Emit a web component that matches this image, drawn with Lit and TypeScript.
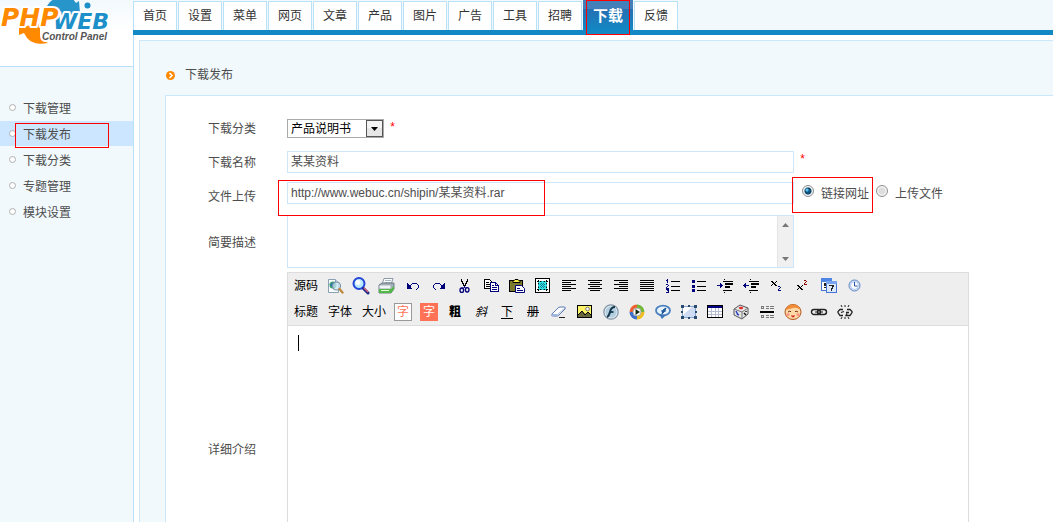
import { LitElement, html, css, svg, type SVGTemplateResult } from "lit";
import { customElement, property, state } from "lit/decorators.js";

const NAVY = "#00007b";

const lines = (rows: Array<[number, number]>, color = "#000") =>
  rows.map(([x, w], i) => svg`<rect x=${x} y=${3 + i * 2} width=${w} height="1" fill=${color} />`);

const undoShape = svg`
  <path d="M3 6h1v1h1v1h1v1h1v2h1v1h-5z" fill=${NAVY} />
  <path d="M6 8h1v-1h1v-1h5v1h1v1h1v3h-1v1h-1v1h-1v-1h1v-1h1v-3h-1v-1h-5v1h-1v1h-1z" fill=${NAVY} />`;

const indentShape = (flip: boolean) => svg`
  <path d="M8 2h1v1h-1zM8 15h1v1h-1z" fill="#000" />
  <path d="M7 4h10v1h-10zM9 6h8v2h-8zM9 9h5v2h-5zM7 13h9v1h-9z" fill="#000" />
  <g transform=${flip ? "translate(8 0) scale(-1 1)" : ""}>
    <path d="M1 8h3v-2h1v1h1v1h1v1h-1v1h-1v1h-1v-2h-3z" fill=${NAVY} />
  </g>`;

const ICONS: Record<string, SVGTemplateResult> = {
  preview: svg`
    <path d="M2.500 2.500h7l3 3v10h-10z" fill="#fafcff" stroke="#8aa0b4" />
    <path d="M9.500 2.500v3h3" fill="#d9e4ee" stroke="#8aa0b4" />
    <circle cx="7" cy="8" r="3.600" fill="#3aa070" />
    <path d="M4 8q3-3 5-2l-2 4z" fill="#2d6fc0" />
    <circle cx="10.500" cy="9" r="4" fill="#cfe8f7" fill-opacity=".75" stroke="#7893a8" stroke-width="1.200" />
    <path d="M13.500 12l3 3.500" stroke="#c08a3e" stroke-width="2.400" stroke-linecap="round" />`,
  search: svg`
    <circle cx="7" cy="6.500" r="5.500" fill="#b9eaff" stroke="#2546d8" stroke-width="2" />
    <circle cx="6" cy="5.500" r="2.500" fill="#fff" />
    <path d="M11.500 11.500l4.500 4.500" stroke="#1d2c86" stroke-width="3" stroke-linecap="round" />
    <path d="M12 11l4 4" stroke="#e0607a" stroke-width="1.200" />`,
  print: svg`
    <path d="M6 1.500h9l-2 6h-9z" fill="#fff" stroke="#8b98a8" />
    <path d="M7 3.500h6M6.500 5.500h6" stroke="#a8b8c8" />
    <path d="M1 8l3-2h12v6l-3 4h-12z" fill="#a3afb8" stroke="#6f7e88" />
    <path d="M1.500 8.500h11v3h-11z" fill="#f1f4f6" />
    <path d="M1 12h12l3-3v3l-3 4h-12z" fill="#53b946" />
    <path d="M3 13.500h8" stroke="#eaffdf" />`,
  undo: undoShape,
  redo: svg`<g transform="translate(18 0) scale(-1 1)">${undoShape}</g>`,
  cut: svg`
    <path d="M5 2h1v2h1v2h1v2h1v-2h1v-2h1v-2h1v3h-1v2h-1v2h-1v2h-1v-2h-1v-2h-1v-2h-1z" fill="#000" />
    <path d="M7.500 10l-1 1M9.500 10l1 1M8.500 9v2" stroke=${NAVY} />
    <ellipse cx="5.800" cy="13.200" rx="1.800" ry="2.200" fill="none" stroke=${NAVY} stroke-width="1.300" />
    <ellipse cx="11.200" cy="12.800" rx="1.800" ry="2.200" fill="none" stroke=${NAVY} stroke-width="1.300" />`,
  copy: svg`
    <path d="M2.500 2.500h5l3 3v6h-8z" fill="#fff" stroke="#000" />
    <path d="M4 5.500h3M4 7.500h4M4 9.500h4" stroke="#000" />
    <path d="M8.500 5.500h5l3 3v6h-8z" fill="#fff" stroke=${NAVY} />
    <path d="M13.500 5.500v3h3M10 8.500h2M10 10.500h5M10 12.500h5" fill="none" stroke=${NAVY} />`,
  paste: svg`
    <rect x="1.500" y="3.500" width="13" height="11" fill="#7d7b2e" stroke="#000" />
    <path d="M5 5.500v-1l2-2h3l2 2v1z" fill="#f5ee42" stroke="#000" />
    <path d="M7.500 8.500h6l3 3v4h-9z" fill="#fff" stroke=${NAVY} />
    <path d="M9 11.500h3M9 13.500h6" stroke=${NAVY} />`,
  selectall: svg`
    <rect x="1.500" y="1.500" width="14" height="14" fill="#fff" stroke="#000" />
    <rect x="4" y="4" width="9" height="9" fill="#35e0e4" />
    <path d="M3 4.500h11M3 12.500h11M4.500 3v11M12.500 3v11" stroke="#000" stroke-dasharray="2 1" />
    <path d="M7.500 4v9M9.500 4v9M4 7.500h9M4 9.500h9" stroke="#167f91" stroke-dasharray="1 1" />`,
  left: svg`${lines([[2, 14], [2, 9], [2, 14], [2, 9], [2, 14], [2, 9]])}`,
  center: svg`${lines([[2, 14], [4, 10], [2, 14], [4, 10], [2, 14], [4, 10]])}`,
  right: svg`${lines([[2, 14], [7, 9], [2, 14], [7, 9], [2, 14], [7, 9]])}`,
  justify: svg`${lines([[2, 14], [2, 14], [2, 14], [2, 14], [2, 14], [2, 14]])}`,
  ordered: svg`
    <path d="M3 2h1v4h-1zM2 3h1v1h-1zM2 7h2v1h1v1h-1v1h-1v1h2v1h-3v-2h1v-1h1v-1h-2zM2 12h3v4h-3v-1h2v-1h-1v-1h1v-.500h-2z" fill=${NAVY} />
    <path d="M7 4h9v1h-9zM7 9h9v1h-9zM7 13h9v1h-9z" fill="#000" />`,
  unordered: svg`
    <path d="M2 3h3v3h-3zM2 8h3v3h-3zM2 12h3v3h-3z" fill=${NAVY} />
    <path d="M7 4h9v1h-9zM7 9h9v1h-9zM7 13h9v1h-9z" fill="#000" />`,
  indent: indentShape(false),
  outdent: indentShape(true),
  sub: svg`
    <path d="M3 4h2v1h1v1h1v-1h1v-1h1v1h-1v1h-1v1h1v1h1v1h-2v-1h-1v-1h-1v1h-1v1h-1v-1h1v-1h1v-1h-1v-1h-1z" fill="#000" />
    <path d="M10 9h2v1h1v1h-1v1h-1v1h2v1h-3v-2h1v-1h1v-1h-2z" fill=${NAVY} />`,
  sup: svg`
    <path d="M3 8h2v1h1v1h1v-1h1v-1h1v1h-1v1h-1v1h1v1h1v1h-2v-1h-1v-1h-1v1h-1v1h-1v-1h1v-1h1v-1h-1v-1h-1z" fill="#000" />
    <path d="M10 3h2v1h1v1h-1v1h-1v1h2v1h-3v-2h1v-1h1v-1h-2z" fill="#8c0000" />`,
  date: svg`
    <rect x="1.500" y="1.500" width="10" height="12" fill="#fff" stroke="#4475d0" />
    <path d="M1 1h11v4h-11z" fill="#4f86e6" />
    <path d="M4 6h3v1h-1v1h1v3h-3v-1h2v-1h-2z" fill="#222" />
    <rect x="6.500" y="4.500" width="10" height="11" fill="#dce9fb" stroke="#4475d0" />
    <path d="M6 4h11v3h-11z" fill="#78a6ee" />
    <path d="M9 8h5v2h-1v2h-1v2h-1v-3h1v-2h-3z" fill="#222" />`,
  time: svg`
    <circle cx="8.500" cy="8.500" r="5.500" fill="#e4effc" stroke="#5b7fc0" />
    <circle cx="8.500" cy="8.500" r="4" fill="#fff" stroke="#a6c2ec" />
    <path d="M8.500 5v4h3" fill="none" stroke="#2a4fa0" />`,
  eraser: svg`
    <path d="M2 11l6-6q1-1 2-1h4q2 0 1 2l-6 6q-1 1-2 1h-4q-2 0-1-2z" fill="#fff" stroke="#5c79b4" />
    <path d="M2 11h5l2 1-2 1h-4q-2 0-1-2z" fill="#9eb6e2" />
    <path d="M8 11l7-6" stroke="#a8bbdc" />
    <path d="M9 14.500h6" stroke="#222" />`,
  image: svg`
    <rect x="1.500" y="2.500" width="14" height="12" fill="#fff36a" stroke="#000" />
    <path d="M2 14v-2l4-4 3 3 3-2 3 3v2z" fill="#67673b" />
    <path d="M2 12l4-4 3 4 3-3 3 3" fill="none" stroke="#000" />
    <circle cx="11.500" cy="6" r="1.800" fill="#fff" stroke="#777" />`,
  flash: svg`
    <circle cx="9" cy="9" r="7.200" fill="#dbe8ef" stroke="#8295a6" stroke-width="1.200" />
    <circle cx="9" cy="9" r="5.500" fill="#b4cfdf" />
    <path d="M13 4q-4 0-5 5-1 4-3 5" fill="none" stroke="#15384f" stroke-width="2" />
    <path d="M7.500 9h4" stroke="#15384f" stroke-width="1.800" />`,
  media: svg`
    <path d="M9 9v-7.500a7.500 7.500 0 0 0-7.500 7.500z" fill="#ed6132" />
    <path d="M9 9h7.500a7.500 7.500 0 0 0-7.500-7.500z" fill="#72b836" />
    <path d="M9 9v7.500a7.500 7.500 0 0 0 7.500-7.500z" fill="#f0bd20" />
    <path d="M9 9h-7.500a7.500 7.500 0 0 0 7.500 7.500z" fill="#3c70ca" />
    <circle cx="9" cy="9" r="4" fill="#fff" stroke="#a8b0ac" />
    <path d="M7.500 6l4.500 3-4.500 3z" fill="#172b12" />`,
  real: svg`
    <ellipse cx="9" cy="7.500" rx="7" ry="4.800" fill="#e8f2fb" stroke="#4a80bd" stroke-width="1.800" />
    <path d="M5 11l3 5 4-4z" fill="#3c74b5" />
    <path d="M8 11q0-5 4-6-1 4-4 6zM7 8l5 0" fill="#1f599e" stroke="#1f599e" />`,
  frame: svg`
    <rect x="2.500" y="3.500" width="13" height="11" fill="#cddcf3" stroke="#8aa4cb" />
    <path d="M3 4h9l-9 8z" fill="#fff" />
    <path d="M1 2h3v3h-3zM14 2h3v3h-3zM1 13h3v3h-3zM14 13h3v3h-3zM8 2h2v2h-2zM8 14h2v2h-2zM1 8h2v2h-2zM15 8h2v2h-2z" fill="#294a6f" />`,
  table: svg`
    <rect x="1.500" y="2.500" width="15" height="12" fill="#fff" stroke="#000" />
    <path d="M2 3h14v2h-14z" fill="#000080" />
    <path d="M2 8.500h14M2 11.500h14M5.500 5v9M9.500 5v9M12.500 5v9" stroke="#b6bdd2" />`,
  dice: svg`
    <path d="M2 6l6-4 8 3v6l-6 5-8-4z" fill="#e5e5e5" stroke="#555" />
    <path d="M2 6l8 3 6-4M10 9v7" fill="none" stroke="#777" />
    <ellipse cx="9" cy="5" rx="2.200" ry="1.300" fill="#e52d2d" />
    <path d="M4 8l2 4M5 11l2 1" stroke="#2941c4" stroke-width="1.500" />
    <path d="M12 10l1 1M14 8v1M13 12l1-1" stroke="#111" stroke-width="1.500" />`,
  rule: svg`
    <path d="M3 6v-2l1-1h1v3M3 5h2M3 15v-2l1-1h1v3M3 14h2M8 3.500h3M12 3.500h4M8 5.500h3M12 5.500h4M8 12.500h3M12 12.500h4M8 14.500h3M12 14.500h4" fill="none" stroke="#777" />
    <path d="M2 8h14v2h-14z" fill="#000" />`,
  smile: svg`
    <ellipse cx="9" cy="9" rx="8" ry="7.500" fill="#ffd9a8" stroke="#b5571b" />
    <path d="M1.500 7q2-5.500 7.500-5.500t7.500 5.500q-4-3-7.500-2t-7.500 2z" fill="#ef8d39" />
    <path d="M4 9l2-1 1 1M11 9l1-1 2 1" fill="none" stroke="#7a3014" />
    <path d="M7 12q2 1 4 0-.500 2.500-2 2.500t-2-2.500z" fill="#d32a1f" />
    <circle cx="4" cy="11.500" r="1.600" fill="#ff9584" /><circle cx="14" cy="11.500" r="1.600" fill="#ff9584" />`,
  link: svg`
    <rect x="1.500" y="6.500" width="9" height="5" rx="2.500" fill="none" stroke="#222" stroke-width="1.400" />
    <rect x="7.500" y="6.500" width="9" height="5" rx="2.500" fill="none" stroke="#222" stroke-width="1.400" />
    <path d="M5 9h8" stroke="#222" />`,
  unlink: svg`
    <path d="M7 6.500h-3l-2 2v1l2 3h3M5 9.500l3-1M11 6.500h3l2 2v1l-2 3h-4l1-2M10 9.500h3" fill="none" stroke="#222" stroke-width="1.300" />
    <path d="M5 2l1 2M9 2v2M13 2l-1 2M5 16l1-2M9 16v-2M13 16l-1-2" stroke="#222" />`,
};

const CRISP = new Set(["left", "center", "right", "justify", "ordered", "unordered", "indent", "outdent", "sub", "sup", "table", "rule", "copy", "undo", "redo"]);

const FIRST_ROW: Array<[string, string]> = [
  ["preview", "预览"], ["search", "查找"], ["print", "打印"], ["undo", "撤销"], ["redo", "重做"],
  ["cut", "剪切"], ["copy", "复制"], ["paste", "粘贴"], ["selectall", "全选"], ["left", "左对齐"],
  ["center", "居中"], ["right", "右对齐"], ["justify", "两端对齐"], ["ordered", "编号"], ["unordered", "项目符号"],
  ["indent", "增加缩进"], ["outdent", "减少缩进"], ["sub", "下标"], ["sup", "上标"], ["date", "日期"], ["time", "时间"],
];

const SECOND_ROW: Array<[string, string]> = [
  ["eraser", "清除格式"], ["image", "图片"], ["flash", "Flash"], ["media", "视频"], ["real", "Real"],
  ["frame", "层"], ["table", "表格"], ["dice", "特殊符号"], ["rule", "水平线"], ["smile", "表情"],
  ["link", "链接"], ["unlink", "取消链接"],
];

@customElement("rich-editor")
export class RichEditor extends LitElement {
  static styles = css`
    :host { display: block; }
    .editor { display: flex; flex-direction: column; box-sizing: border-box; min-height: 354px; border: 1px solid #ddd; background: #fff; }
    .toolbar { background: #eee; border-bottom: 1px solid #ddd; }
    .row { display: flex; height: 26px; overflow: hidden; }
    .tool { flex: none; display: grid; place-items: center; width: 26px; height: 26px; padding: 0; border: 0; background: none; color: #000; font: 12px/18px "Liberation Sans", "Noto Sans CJK SC", sans-serif; }
    .wide { width: 36px; margin-right: -2px; }
    .icon { display: block; width: 18px; height: 18px; }
    .chip { box-sizing: border-box; width: 18px; height: 18px; line-height: 16px; border: 1px solid #999; background: #fff; color: #ff7256; }
    .filled { border-color: #ff7256; background: #ff7256; color: #fff; }
    .bold { font-weight: 900; }
    .italic { font-style: italic; }
    .underline { text-decoration: underline; text-underline-offset: 2px; }
    .strike { text-decoration: line-through; }
    .body { flex: 1; padding: 9px 10px; }
    .caret { display: block; width: 1px; height: 16px; background: #000; }
  `;

  private button([name, label]: [string, string]) {
    return html`<button class="tool" type="button" aria-label=${label}>
      <svg class="icon" viewBox="0 0 18 18" shape-rendering=${CRISP.has(name) ? "crispEdges" : "auto"}>${ICONS[name]}</svg>
    </button>`;
  }

  render() {
    return html`
      <div class="editor">
        <div class="toolbar">
          <div class="row">
            <button class="tool wide" type="button">源码</button>
            ${FIRST_ROW.map((t) => this.button(t))}
          </div>
          <div class="row">
            ${["标题", "字体", "大小"].map((t) => html`<button class="tool wide" type="button">${t}</button>`)}
            <button class="tool" type="button"><span class="chip">字</span></button>
            <button class="tool" type="button"><span class="chip filled">字</span></button>
            <button class="tool bold" type="button">粗</button>
            <button class="tool italic" type="button">斜</button>
            <button class="tool underline" type="button">下</button>
            <button class="tool strike" type="button">册</button>
            ${SECOND_ROW.map((t) => this.button(t))}
          </div>
        </div>
        <div class="body" role="textbox" aria-label="详细介绍" tabindex="0"><span class="caret"></span></div>
      </div>`;
  }
}

@customElement("brand-logo")
export class BrandLogo extends LitElement {
  static styles = css`
    :host { display: block; }
    .logo { display: block; width: 120px; height: 46px; }
    .name { font-family: "DejaVu Sans", sans-serif; font-weight: bold; font-style: italic; stroke: #fff; stroke-width: 4px; stroke-linejoin: round; paint-order: stroke; }
    .php { font-size: 25px; fill: #ff8a00; }
    .web { font-size: 22px; fill: #1d8fc9; }
    .sub { font: italic bold 10px "Liberation Sans", sans-serif; fill: #555; stroke: #fff; stroke-width: 4px; stroke-linejoin: round; paint-order: stroke; }
  `;
  render() {
    return html`<svg class="logo" viewBox="0 0 120 46" role="img" aria-label="PHPWEB Control Panel">
      <path d="M46 8Q50 0 55-1H73L76 3L79 1L80 13L70 20H56Z" fill="#2795ca" />
      <path d="M19 27L40 24V33Q39 39 48 43Q34 46 27 38L24 33L19 35Z" fill="#ff8a00" />
      <text class="name web" x="53" y="29">WEB</text>
      <circle cx="87.500" cy="5.500" r="3" fill="#1d8fc9" />
      <text class="name php" x="1" y="26">PHP</text>
      <text class="sub" x="42" y="40">Control Panel</text>
    </svg>`;
  }
}

@customElement("app-root")
export class AppRoot extends LitElement {
  @property() active = "下载";
  @state() private source = "link";

  static styles = css`
    :host { display: block; height: 100vh; overflow: hidden; color: #4d4d4d; background: #fff; font: 12px/18px "Liberation Sans", "Noto Sans CJK SC", sans-serif; }
    .shell { display: grid; grid-template-columns: 133px minmax(0, 1fr); min-height: 100%; }
    .side { background: #f1f9fd; }
    .brand { height: 66px; border-bottom: 1px solid #b9e1f8; background: linear-gradient(#f2f9fd, #fff 30px); }
    .menu { display: grid; gap: 1px; margin: 0; padding: 28px 0 0; list-style: none; }
    .item { position: relative; }
    .menu-link { display: flex; align-items: center; gap: 7px; box-sizing: border-box; height: 25px; padding: 2px 0 0 9px; color: inherit; text-decoration: none; }
    .menu-link::before { content: ""; box-sizing: border-box; width: 7px; height: 7px; margin-bottom: 2px; border: 1px solid #b0b0b0; border-radius: 50%; background: #fff; }
    .current { background: #cce6ff; }
    .main { display: flex; flex-direction: column; min-width: 0; border-left: 1px solid #b9e1f8; }
    .tabs { display: flex; align-items: flex-end; gap: 1px; height: 30px; margin-left: -1px; border-bottom: 5px solid #1288c4; background: #f1f9fd; }
    .tab { position: relative; flex: none; box-sizing: border-box; width: 44px; height: 29px; border: 1px solid #b9e1f8; border-bottom: 0; background: #fff; color: #333; line-height: 28px; text-align: center; text-decoration: none; }
    .tab.on { width: 50px; height: 30px; border: 0; background: linear-gradient(#4380b9 0 9px, #276fb2 9px, #1288c4 30px); color: #fff; font-size: 15px; font-weight: bold; line-height: 31px; }
    .mark { position: absolute; z-index: 1; border: 1px solid #f00; pointer-events: none; }
    .mark-tab { inset: 0 3px -5px; }
    .mark-item { inset: 2px 24px -2px 15px; }
    .mark-url { top: -2px; bottom: -12px; left: -9px; width: 265px; }
    .mark-radio { inset: -5px -4px -10px -10px; }
    .panel { flex: 1; margin: 5px 0 0 5px; border: solid #cce6fa; border-width: 1px 0 0 1px; background: #f1f9fd; }
    .title { display: flex; align-items: center; gap: 10px; margin: 0; padding: 25px 0 0 26px; font-size: 12px; font-weight: normal; }
    .arrow { width: 9px; height: 9px; }
    .form { display: block; margin: 11px 0 0 25px; padding: 15px 16px 15px 42px; border: solid #cce6fa; border-width: 1px 0 0 1px; background: #fff; }
    .row { display: grid; grid-template-columns: 79px minmax(0, 1fr); align-items: center; min-height: 34px; }
    .label { padding-top: 2px; }
    .field { position: relative; display: flex; align-items: center; gap: 5px; min-width: 0; }
    .upper { align-self: start; padding-top: 3px; align-items: flex-start; }
    .input, .area { box-sizing: border-box; width: 507px; min-width: 0; border: 1px solid #cce6fa; background: #fff; }
    .input { height: 22px; padding: 0 3px 3px; color: #4d4d4d; font: inherit; outline: none; }
    .url { position: relative; width: 507px; min-width: 0; }
    .url .input { display: block; width: 100%; }
    .select { position: relative; display: block; }
    .native { box-sizing: border-box; display: block; width: 97px; height: 19px; padding: 1px 20px 0 3px; border: 1px solid #aaa; border-radius: 0; appearance: none; background: #fff; color: #000; font: 12px/16px "Liberation Sans", "Noto Sans CJK SC", sans-serif; }
    .drop { position: absolute; top: 1px; right: 1px; width: 17px; height: 17px; pointer-events: none; }
    .star { align-self: flex-start; color: #f00; font: 12px/18px "Liberation Mono", monospace; }
    .choices { display: flex; gap: 7px; margin-left: 3px; }
    .choice { position: relative; display: flex; gap: 7px; white-space: nowrap; }
    .choice-text { padding-top: 3px; }
    .radio { appearance: none; box-sizing: border-box; width: 12px; height: 12px; margin: 3px 0; border: 1px solid #8e8f8f; border-radius: 50%; background: radial-gradient(#ddd 0 3px, #f4f4f4 4px); }
    .radio:checked { background: radial-gradient(circle at 4px 4px, #5cc3ee 0 1px, transparent 2px), radial-gradient(circle, #0b5a8c 0 2px, #123850 3px, #e8f4fa 4px); }
    .area { display: flex; height: 53px; }
    .text { flex: 1; min-width: 0; padding: 2px 3px; border: 0; resize: none; overflow: hidden; outline: none; font: inherit; }
    .scroll { display: flex; flex-direction: column; justify-content: space-between; align-items: center; box-sizing: border-box; width: 16px; padding: 7px 0 6px; background: #f0f0f0; border-left: 1px solid #e4e4e4; }
    .tick { width: 7px; height: 4px; }
    .tall { padding: 2px 0; }
    .editor { width: 100%; max-width: 682px; }
  `;

  private pick(e: Event) {
    this.source = (e.target as HTMLInputElement).value;
  }

  render() {
    const tabs = ["首页", "设置", "菜单", "网页", "文章", "产品", "图片", "广告", "工具", "招聘", "下载", "反馈"];
    const menu = ["下载管理", "下载发布", "下载分类", "专题管理", "模块设置"];
    return html`
      <div class="shell">
        <aside class="side">
          <div class="brand"><brand-logo></brand-logo></div>
          <ul class="menu">
            ${menu.map((m) => html`<li class="item">
              <a class="menu-link ${m === "下载发布" ? "current" : ""}" href="#">${m}</a>
              ${m === "下载发布" ? html`<span class="mark mark-item"></span>` : ""}
            </li>`)}
          </ul>
        </aside>
        <main class="main">
          <nav class="tabs">
            ${tabs.map((t) => html`<a class="tab ${t === this.active ? "on" : ""}" href="#">${t}${t === this.active ? html`<span class="mark mark-tab"></span>` : ""}</a>`)}
          </nav>
          <section class="panel">
            <h1 class="title">
              <svg class="arrow" viewBox="0 0 9 9"><circle cx="4.500" cy="4.500" r="4.500" fill="#ff8a00" /><path d="M3.500 2l2.500 2.500-2.500 2.500" fill="none" stroke="#fff" stroke-width="1.600" /></svg>
              下载发布
            </h1>
            <form class="form">
              <div class="row">
                <label class="label" for="category">下载分类</label>
                <div class="field">
                  <span class="select">
                    <select class="native" id="category"><option>产品说明书</option></select>
                    <svg class="drop" viewBox="0 0 17 17"><rect x=".500" y=".500" width="16" height="16" fill="#e6e6e6" stroke="#555" /><path d="M1 1h15v7h-15z" fill="#f3f3f3" /><path d="M5 7h7l-3.500 4z" fill="#000" /></svg>
                  </span>
                  <span class="star">*</span>
                </div>
              </div>
              <div class="row">
                <label class="label" for="name">下载名称</label>
                <div class="field"><input class="input" id="name" value="某某资料" /><span class="star">*</span></div>
              </div>
              <div class="row">
                <label class="label" for="url">文件上传</label>
                <div class="field upper">
                  <div class="url"><input class="input" id="url" value="http://www.webuc.cn/shipin/某某资料.rar" /><span class="mark mark-url"></span></div>
                  <div class="choices">
                    <label class="choice"><input class="radio" type="radio" name="source" value="link" .checked=${this.source === "link"} @change=${this.pick} /><span class="choice-text">链接网址</span><span class="mark mark-radio"></span></label>
                    <label class="choice"><input class="radio" type="radio" name="source" value="file" .checked=${this.source === "file"} @change=${this.pick} /><span class="choice-text">上传文件</span></label>
                  </div>
                </div>
              </div>
              <div class="row tall">
                <label class="label" for="brief">简要描述</label>
                <div class="field">
                  <div class="area">
                    <textarea class="text" id="brief"></textarea>
                    <span class="scroll">
                      <svg class="tick" viewBox="0 0 7 4"><path d="M0 4l3.500-4 3.500 4z" fill="#777" /></svg>
                      <svg class="tick" viewBox="0 0 7 4"><path d="M0 0l3.500 4 3.500-4z" fill="#777" /></svg>
                    </span>
                  </div>
                </div>
              </div>
              <div class="row tall">
                <span class="label">详细介绍</span>
                <rich-editor class="editor"></rich-editor>
              </div>
            </form>
          </section>
        </main>
      </div>`;
  }
}
